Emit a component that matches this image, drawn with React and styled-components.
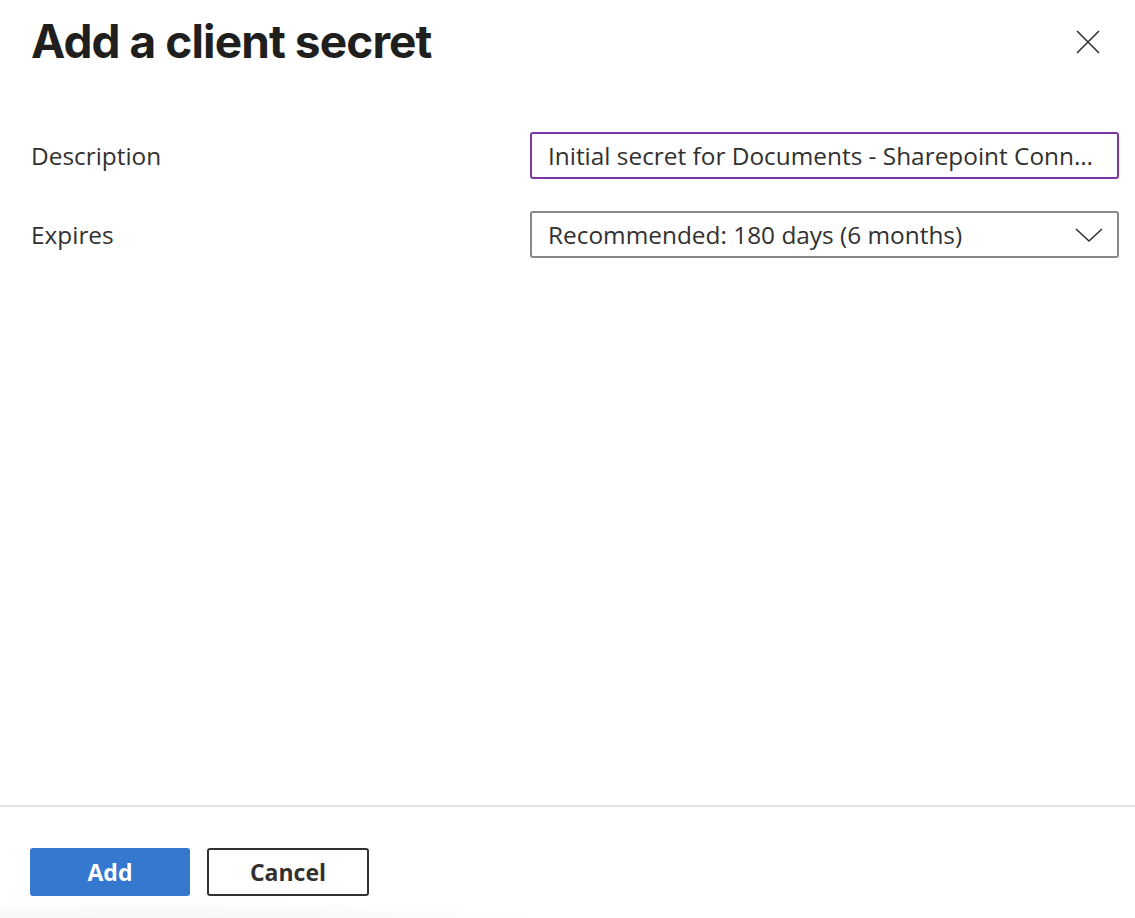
import React from "react";
import styled, { createGlobalStyle } from "styled-components";

const Global = createGlobalStyle`
  html, body { margin: 0; padding: 0; background: #ffffff; }
  body { font-family: "Open Sans", "Noto Sans", sans-serif; color: #323130; }
  * { box-sizing: border-box; }
`;

const Page = styled.div`
  display: flex;
  flex-direction: column;
  height: 918px;
  overflow: hidden;
`;

const Header = styled.header`
  display: flex;
  align-items: flex-start;
  justify-content: space-between;
  padding: 12px 34px 0 31px;
  height: 104px;
`;

const Title = styled.h1`
  margin: 0;
  font-family: Inter, "Liberation Sans", sans-serif;
  font-weight: 700;
  font-size: 46px;
  line-height: 58px;
  letter-spacing: -0.9px;
  color: #201f1e;
`;

const CloseButton = styled.button`
  border: none;
  background: none;
  padding: 0;
  margin-top: 17px;
  width: 26px;
  height: 26px;
  display: flex;
  align-items: center;
  justify-content: center;
  color: #323130;
  cursor: pointer;
`;

const Main = styled.main`
  flex: 1;
  padding: 28px 16px 0 31px;
  display: grid;
  grid-template-columns: 499px 589px;
  grid-auto-rows: 47px;
  row-gap: 32px;
  align-content: start;
`;

const Label = styled.label`
  display: flex;
  align-items: center;
  font-size: 24.4px;
  color: #323130;
`;

const Field = styled.div`
  display: flex;
  align-items: center;
  height: 47px;
  padding: 0 14px 0 16px;
  border: 2px solid ${(p) => (p.$focused ? "#7e35a6" : "#8a8886")};
  border-radius: 3px;
  font-size: 24.4px;
  color: #323130;
  background: #fff;
`;

const FieldText = styled.span`
  flex: 1;
  white-space: nowrap;
`;

const Footer = styled.footer`
  border-top: 2px solid #e1e1e1;
  height: 113px;
  display: flex;
  gap: 17px;
  padding: 41px 0 0 30px;
  background: radial-gradient(ellipse 420px 26px at 150px 118px, rgba(0,0,0,0.05), rgba(0,0,0,0) 100%);
`;

const Button = styled.button`
  width: ${(p) => (p.$primary ? "160px" : "162px")};
  height: 48px;
  border-radius: 3px;
  font-family: "Open Sans", "Noto Sans", sans-serif;
  font-weight: 700;
  font-size: 23px;
  cursor: pointer;
  border: 2px solid ${(p) => (p.$primary ? "#3578cf" : "#323130")};
  background: ${(p) => (p.$primary ? "#3578cf" : "#ffffff")};
  color: ${(p) => (p.$primary ? "#ffffff" : "#323130")};
  display: flex;
  align-items: center;
  justify-content: center;
`;

export default function App() {
  return (
    <Page>
      <Global />
      <Header>
        <Title>Add a client secret</Title>
        <CloseButton aria-label="Close">
          <svg width="24" height="24" viewBox="0 0 24 24">
            <path d="M1 1 L23 23 M23 1 L1 23" stroke="#323130" strokeWidth="1.6" fill="none" />
          </svg>
        </CloseButton>
      </Header>
      <Main>
        <Label>Description</Label>
        <Field $focused>
          <FieldText title="Initial secret for Documents - Sharepoint Connector">
            Initial secret for Documents - Sharepoint Conn…
          </FieldText>
        </Field>
        <Label>Expires</Label>
        <Field>
          <FieldText>Recommended: 180 days (6 months)</FieldText>
          <svg width="28" height="16" viewBox="0 0 28 16">
            <path d="M1 2 L14 14 L27 2" stroke="#323130" strokeWidth="1.6" fill="none" />
          </svg>
        </Field>
      </Main>
      <Footer>
        <Button $primary>Add</Button>
        <Button>Cancel</Button>
      </Footer>
    </Page>
  );
}
